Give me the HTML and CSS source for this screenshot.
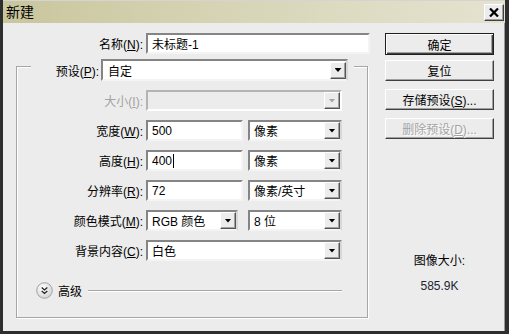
FILE: index.html
```html
<!DOCTYPE html>
<html>
	<head>
		<meta charset="utf-8">
		<title>新建</title>
		<link rel="stylesheet" href="styles.css">
	</head>
	<body>
		<!-- New document dialog -->
		<div class="dialog">
			<div class="titlebar">
				<span class="title">新建</span>
				<button class="close" type="button">
					<svg width="10" height="9" viewBox="0 0 10 9"><path d="M1 0.5 L9 8.5 M9 0.5 L1 8.5" stroke="#000" stroke-width="2.2" fill="none"/></svg>
				</button>
			</div>
			<div class="content">
				<div class="main">
					<div class="row">
						<label class="lbl">名称(<u>N</u>):</label>
						<div class="field name">未标题-1</div>
					</div>
					<!-- Preset group -->
					<div class="group">
						<div class="group-head">
							<label class="head-lbl">预设(<u>P</u>):</label>
							<div class="field select preset">自定<span class="drop"></span></div>
						</div>
						<div class="rows">
							<div class="row">
								<label class="lbl inner off">大小(<u>I</u>):</label>
								<div class="field select wide off"><span class="drop"></span></div>
							</div>
							<div class="row">
								<label class="lbl inner">宽度(<u>W</u>):</label>
								<div class="field num">500</div>
								<div class="field select unit">像素<span class="drop"></span></div>
							</div>
							<div class="row">
								<label class="lbl inner">高度(<u>H</u>):</label>
								<div class="field num">400<span class="caret"></span></div>
								<div class="field select unit">像素<span class="drop"></span></div>
							</div>
							<div class="row">
								<label class="lbl inner">分辨率(<u>R</u>):</label>
								<div class="field num">72</div>
								<div class="field select unit">像素/英寸<span class="drop"></span></div>
							</div>
							<div class="row">
								<label class="lbl inner">颜色模式(<u>M</u>):</label>
								<div class="field select mode">RGB 颜色<span class="drop"></span></div>
								<div class="field select unit">8 位<span class="drop"></span></div>
							</div>
							<div class="row">
								<label class="lbl inner">背景内容(<u>C</u>):</label>
								<div class="field select wide">白色<span class="drop"></span></div>
							</div>
						</div>
						<div class="advanced">
							<svg width="17" height="17" viewBox="0 0 17 17">
								<defs>
									<radialGradient id="knob" cx="0.4" cy="0.35" r="0.7">
										<stop offset="0" stop-color="#ffffff"/>
										<stop offset="1" stop-color="#d2d2d2"/>
									</radialGradient>
								</defs>
								<circle cx="8.5" cy="8.5" r="7.8" fill="url(#knob)" stroke="#a2a2a2"/>
								<path d="M5.7 5.6 L8.5 8 L11.3 5.6 M5.7 9 L8.5 11.4 L11.3 9" stroke="#222" stroke-width="1.3" fill="none"/>
							</svg>
							<span class="adv-text">高级</span>
							<span class="adv-line"></span>
						</div>
					</div>
				</div>
				<!-- Right side buttons -->
				<div class="side">
					<button class="btn default" type="button">确定</button>
					<button class="btn" type="button">复位</button>
					<button class="btn" type="button">存储预设(<u>S</u>)...</button>
					<button class="btn off" type="button">删除预设(<u>D</u>)...</button>
					<div class="info">
						<div>图像大小:</div>
						<div class="size">585.9K</div>
					</div>
				</div>
			</div>
		</div>
	</body>
</html>
```
FILE: styles.css
```css
body {
	margin: 0;
	font-family: "Liberation Sans", "Noto Sans CJK SC", sans-serif;
	font-size: 12px;
	color: #000;
	background-color: #ececec;
}
.dialog {
	box-sizing: border-box;
	width: 509px;
	height: 334px;
	background-color: #ececec;
	border-left: 3px solid #2e2e2e;
	border-right: 4px solid #2e2e2e;
	border-bottom: 3px solid #2e2e2e;
	box-shadow: inset -1px 0 #9a9a9a;
}
.titlebar {
	height: 22px;
	border-top: 1px solid #d4d4d4;
	background: linear-gradient(to right, #c9c69d, #d8d6b8 50%, #e5e3d0);
	display: flex;
	align-items: center;
}
.title {
	font-size: 14px;
	line-height: 16px;
	padding-left: 3px;
}
.close {
	margin-left: auto;
	margin-right: 1px;
	width: 20px;
	height: 17px;
	padding: 0;
	background: #ececec;
	border: 1px solid;
	border-color: #fff #404040 #404040 #fff;
	box-shadow: inset -1px -1px #a0a0a0;
	display: flex;
	align-items: center;
	justify-content: center;
}
.content {
	display: flex;
	padding: 10px 0 0 13px;
}
.main {
	width: 354px;
}
.row {
	display: flex;
	align-items: center;
	height: 21px;
}
.lbl {
	width: 127px;
	padding-right: 3px;
	text-align: right;
	white-space: nowrap;
}
.lbl.inner {
	width: 126px;
}
.off {
	color: #a3a3a3;
}
.field {
	box-sizing: border-box;
	height: 21px;
	background: #fff;
	border: 2px solid;
	border-color: #858585 #f4f4f4 #f4f4f4 #858585;
	display: flex;
	align-items: center;
	padding-left: 4px;
	white-space: nowrap;
}
.field.name {
	width: 224px;
}
.field.preset {
	width: 247px;
	height: 22px;
	padding-left: 5px;
}
.field.wide {
	width: 196px;
}
.field.num {
	width: 97px;
}
.field.unit {
	width: 94px;
	margin-left: 5px;
}
.field.mode {
	width: 92px;
	margin-right: 5px;
}
.field.select {
	border-right-color: #d8d8d8;
}
.field.off {
	background: #ececec;
	border-color: #b4b4b4 #fff #fff #b4b4b4;
}
.drop {
	box-sizing: border-box;
	margin-left: auto;
	width: 16px;
	height: 17px;
	background: #ececec;
	border: 1px solid;
	border-color: #fff #555 #555 #fff;
	box-shadow: inset -1px -1px #a0a0a0;
	display: flex;
	align-items: center;
	justify-content: center;
}
.drop::after {
	content: "";
	width: 7px;
	height: 4px;
	background: #000;
	clip-path: polygon(0 0, 100% 0, 50% 100%);
}
.field.off .drop::after {
	background: #a3a3a3;
}
.caret {
	width: 1px;
	height: 14px;
	background: #000;
	margin-left: 1px;
}
.group {
	width: 352px;
	box-sizing: border-box;
	margin-top: 12px;
	border: 1px solid #a6a6a6;
	box-shadow: 1px 1px #fff, inset 1px 1px #fff;
	padding-bottom: 18px;
}
.group-head {
	display: flex;
	align-items: center;
	width: fit-content;
	margin: -8px 0 0 14px;
	padding: 0 6px;
	background: #ececec;
}
.head-lbl {
	width: 62px;
	padding-right: 2px;
	text-align: right;
}
.rows {
	display: flex;
	flex-direction: column;
	gap: 9px;
	padding-top: 9px;
}
.advanced {
	display: flex;
	align-items: center;
	height: 17px;
	margin: 21px 25px 0 19px;
}
.adv-text {
	margin: 0 6px 0 5px;
}
.adv-line {
	flex: 1;
	height: 1px;
	background: #a6a6a6;
	box-shadow: 0 1px #fff;
}
.side {
	width: 109px;
	margin-left: 15px;
	display: flex;
	flex-direction: column;
}
.btn {
	box-sizing: border-box;
	width: 109px;
	height: 21px;
	margin-bottom: 8px;
	padding: 0;
	font: inherit;
	background: #ececec;
	border: 1px solid;
	border-color: #fff #404040 #404040 #fff;
	box-shadow: inset -1px -1px #a0a0a0;
}
.btn.default {
	height: 22px;
	margin-bottom: 5px;
	border-color: #1e1e1e;
	box-shadow: inset 1px 1px #fff, inset -1px -1px #404040, inset -2px -2px #a0a0a0;
}
.btn.off {
	color: #a3a3a3;
	text-shadow: 1px 1px #fff;
}
.info {
	margin-top: 107px;
	text-align: center;
	line-height: 14px;
}
.info .size {
	margin-top: 11px;
	color: #1c2433;
}
```
